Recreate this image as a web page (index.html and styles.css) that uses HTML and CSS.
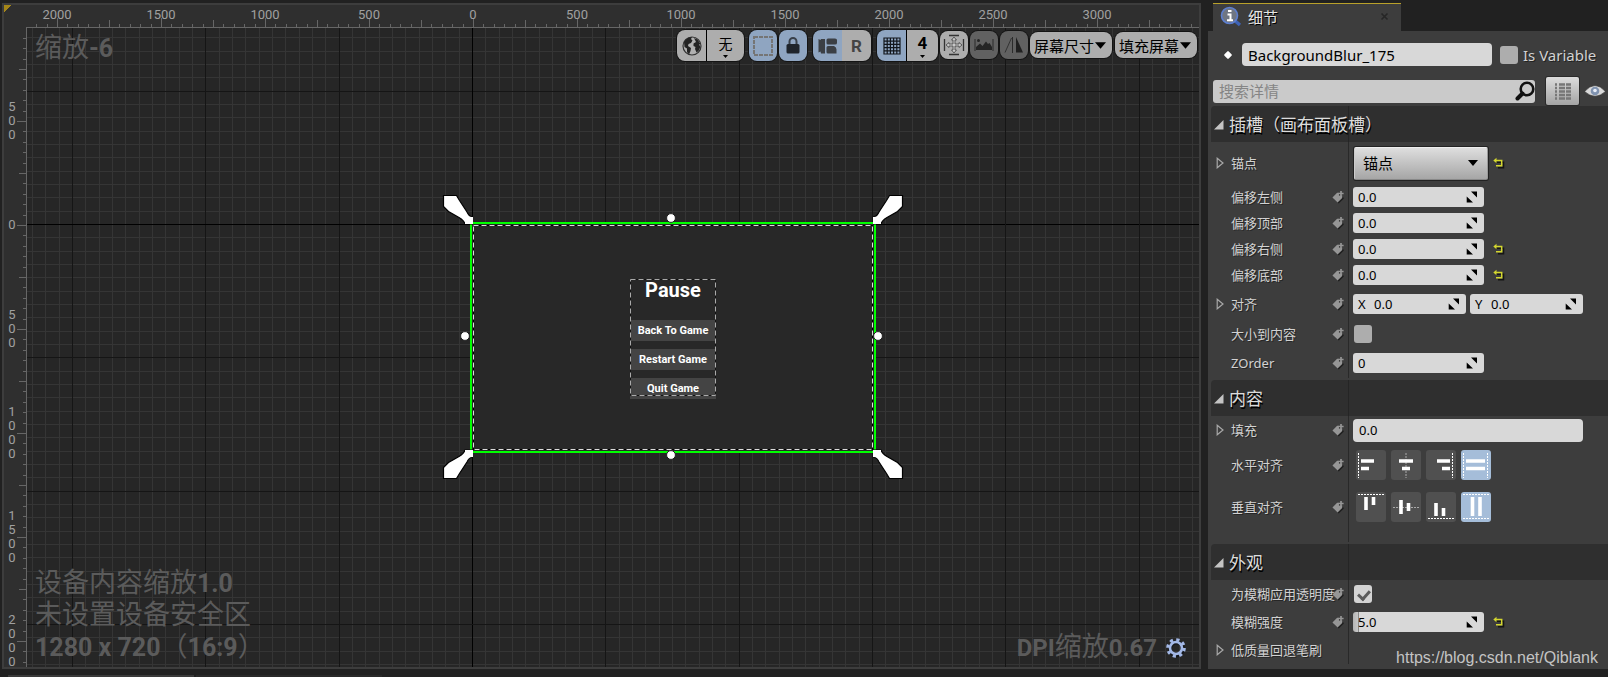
FILE: index.html
```html
<!DOCTYPE html>
<html lang="zh-CN">
<head>
<meta charset="utf-8">
<title>控件蓝图编辑器</title>
<link rel="stylesheet" href="styles.css">
</head>
<body>
<svg class="defs" aria-hidden="true">
  <symbol id="tag" viewBox="0 0 14 14">
    <path d="M1 8 6.500 2.500 8 4v2h3L12 8 6.500 13.500Z" fill="#1f1f1f" transform="translate(.8 .6)"/>
    <path d="M.5 7.500 5.500 2.500H7.500V5.500H11V8L6 12.800Z" fill="#969696"/>
    <path d="M9.700.5V6M7 3.200H12.500" stroke="#969696" stroke-width="1.800"/>
  </symbol>
  <symbol id="spin" viewBox="0 0 12 12"><path d="M5 .5H11V6.500ZM.7 5.500V11.500H7Z" fill="#000"/></symbol>
  <symbol id="reset" viewBox="0 0 12 12">
    <path d="M2 4.500H9.500V10H4" fill="none" stroke="#151515" stroke-width="1.500" transform="translate(1 .8)"/>
    <path d="M2 3.500H8.700V8.700H3" fill="none" stroke="#d3d62f" stroke-width="1.500"/><path d="M.3 3.500 3.500.8V6.200Z" fill="#d3d62f"/>
  </symbol>
  <symbol id="closed" viewBox="0 0 8 12"><path d="M1.200 1.200 7 6 1.200 10.800Z" fill="none" stroke="#a8a8a8" stroke-width="1.200"/></symbol>
  <symbol id="open" viewBox="0 0 10 10"><path d="M9.500 0V9.500H0Z" fill="#c4c4c4"/></symbol>
  <symbol id="down" viewBox="0 0 10 6"><path d="M0 0H10L5 6Z" fill="#000"/></symbol>
</svg>
<main class="app">
  <section class="designer" id="designer" aria-label="设计器">
    <svg class="grid" id="grid"></svg>
    <span class="corner"></span>
    <div class="toolbar">
      <div class="group">
        <button class="tool" aria-label="本地化"><svg width="20" height="20" viewBox="0 0 20 20"><circle cx="10" cy="10" r="9" fill="#b0b0b0" stroke="#333" stroke-width="1.200"/><path d="M2 6Q5 1 10 1L9 3 10.500 4.500 9 7 6.500 8 6 10 9 12 8.500 15 7 18.500 5 16 5 12.500 2.500 11ZM12 2 15.500 3.500 18.500 8 17 8.500 18.500 11 16.500 15 14.500 16.500 13 13 13.500 11 11.500 10 11.500 7.500 14 6Z" fill="#242424"/></svg></button>
        <button class="tool tall wide">无<svg class="mini"><use href="#down"/></svg></button>
      </div>
      <button class="tool on solo" aria-label="显示虚线轮廓"><svg width="20" height="20" viewBox="0 0 20 20"><rect x="1" y="1" width="18" height="18" fill="none" stroke="#757575" stroke-width="2" stroke-dasharray="4 1"/></svg></button>
      <button class="tool on" aria-label="锁定"><svg width="14" height="17" viewBox="0 0 14 17"><path d="M3.500 7V4.500a3.500 3.500 0 0 1 7 0V7" fill="none" stroke="#39404a" stroke-width="2"/><rect x=".5" y="7" width="13" height="9.500" rx="1.500" fill="#1f242b"/></svg></button>
      <div class="group split">
        <button class="tool on" aria-label="流布局"><svg width="20" height="18" viewBox="0 0 20 18"><path d="M.5 2 2.500 3 3 2H7V16.500H3L2.500 14.500.5 15.500ZM10 1.500H17Q19 1.500 19 3V6Q19 7.500 17 7.500H10Q8.500 7.500 8.500 6V3Q8.500 1.500 10 1.500ZM10 9H16Q18.500 10 18.500 12.500V16.500H10Q8.500 16.500 8.500 15V10.500Q8.500 9 10 9Z" fill="#3b3f45"/></svg></button>
        <button class="tool letter">R</button>
      </div>
      <div class="group gapped">
        <button class="tool on" aria-label="网格对齐"><svg width="18" height="18" viewBox="0 0 18 18"><path d="M1 1H17V17H1ZM4.200 1V17M7.400 1V17M10.600 1V17M13.800 1V17M1 4.200H17M1 7.400H17M1 10.600H17M1 13.800H17" fill="none" stroke="#12161c" stroke-width="1.200"/></svg></button>
        <button class="tool tall num">4<svg class="mini"><use href="#down"/></svg></button>
      </div>
      <button class="tool low" aria-label="缩放到适合"><svg width="22" height="22" viewBox="0 0 22 22"><path d="M1.500 5V17M20.500 5V17M6 1.500H16M6 20.500H16" stroke="#333" stroke-width="1.300"/><path d="M11 3 13.500 6H12V10H16V8.500L19 11 16 13.500V12H12V16H13.500L11 19 8.500 16H10V12H6V13.500L3 11 6 8.500V10H10V6H8.500Z" fill="#c8c8c8" stroke="#444" stroke-width=".8"/></svg></button>
      <button class="tool low off" aria-label="预览背景"><svg width="20" height="14" viewBox="0 0 20 14"><path d="M1 1V13M19 1V13" stroke="#2b2b2b"/><circle cx="4.500" cy="2.500" r="1.500" fill="#252525"/><path d="M2 12V9L6 5.500 8.500 8 12 3.500 14 6 15.500 5 18 9V12Z" fill="#252525"/></svg></button>
      <button class="tool low off" aria-label="翻转预览"><svg width="20" height="16" viewBox="0 0 20 16"><path d="M1 15.500 7.500 1" fill="none" stroke="#333"/><path d="M8.500 0V16" stroke="#2b2b2b"/><path d="M12 0 19 15.500H12Z" fill="#202020"/></svg></button>
      <span class="pick"><select aria-label="屏幕尺寸"><option>屏幕尺寸</option></select><svg><use href="#down"/></svg></span>
      <span class="pick last"><select aria-label="填充屏幕"><option>填充屏幕</option></select><svg><use href="#down"/></svg></span>
    </div>
    <p class="note zoom">缩放<b>-6</b></p>
    <div class="note info"><p>设备内容缩放<b>1.0</b></p><p>未设置设备安全区</p><p><b>1280 x 720</b>（<b>16:9</b>）</p></div>
    <div class="note dpi"><p><b>DPI</b>缩放<b>0.67</b></p>
      <button class="gear" aria-label="设置"><svg width="22" height="22" viewBox="0 0 22 22"><circle cx="11.500" cy="12" r="6.500" fill="none" stroke="#15171b" stroke-width="4"/><circle cx="11" cy="11" r="8.300" fill="none" stroke="#a3b8e6" stroke-width="3" stroke-dasharray="3.200 3.320"/><circle cx="11" cy="11" r="6" fill="none" stroke="#a3b8e6" stroke-width="2.600"/></svg></button>
    </div>
    <div class="stage">
      <div class="canvas">
        <div class="menu">
          <h1>Pause</h1>
          <button>Back To Game</button><button>Restart Game</button><button>Quit Game</button>
          <svg class="dash"><path d="M.5.5H85.500V116.500H.5Z" fill="none" stroke="#111"/><path d="M.5.5H85.500V116.500H.5Z" fill="none" stroke="#aaa" stroke-dasharray="5 3"/></svg>
        </div>
      </div>
      <svg class="handles" width="472" height="294" viewBox="0 0 472 294">
        <rect x="34.500" y="35.500" width="399" height="224" fill="none" stroke="#000"/>
        <rect x="34.500" y="35.500" width="399" height="224" fill="none" stroke="#ddd" stroke-dasharray="5 3"/>
        <rect x="32" y="33" width="404" height="229" fill="none" stroke="#0f0" stroke-width="2"/>
        <g fill="#fff" stroke="#000" stroke-width="1.200">
          <path id="petal" d="M4.500 5.500H17.500L20.500 10.500 28 22Q30 26.500 33 26.500V34H26Q25 30.500 20 27.500L9.500 21.500 4.500 16.500Z"/>
          <use href="#petal" transform="matrix(-1 0 0 1 468 0)"/>
          <use href="#petal" transform="matrix(1 0 0 -1 0 294)"/>
          <use href="#petal" transform="matrix(-1 0 0 -1 468 294)"/>
        </g>
        <path d="M26 27h8v7h-8zM434 27h8v7h-8zM26 260h8v7h-8zM434 260h8v7h-8z" fill="#fff"/>
        <g fill="#fff" stroke="#222"><circle cx="232" cy="28" r="4.400"/><circle cx="26" cy="146" r="4.400"/><circle cx="439" cy="146" r="4.400"/><circle cx="232" cy="265" r="4.400"/></g>
      </svg>
    </div>
  </section>

  <aside class="details">
    <header class="tabs"><div class="tab">
      <svg width="22" height="22" viewBox="0 0 22 22"><path d="m14 14 6 5" stroke="#3f63b5" stroke-width="3.500"/><circle cx="9.500" cy="9.500" r="8" fill="#6f7683" stroke="#5d7fd0" stroke-width="1.600"/><path d="M8 5h3.500M7.500 8.500h3V14M7 14.200h6" stroke="#fff" stroke-width="2" fill="none"/></svg>
      <span>细节</span><button aria-label="关闭" class="close"><svg width="9" height="9" viewBox="0 0 9 9"><path d="m1.500 1.500 6 6M7.500 1.500l-6 6" stroke="#262626" stroke-width="1.600"/></svg></button>
    </div></header>
    <div class="body">
      <div class="name">
        <span class="dot"></span><input type="text" class="field title" aria-label="名称" value="BackgroundBlur_175">
        <input type="checkbox" id="isvar"><label for="isvar">Is Variable</label>
      </div>
      <div class="search">
        <div class="find"><input type="search" aria-label="搜索详情" placeholder="搜索详情"><svg width="20" height="20" viewBox="0 0 20 20"><circle cx="12" cy="8" r="6.300" fill="none" stroke="#111" stroke-width="2.600"/><path d="m7.500 12.500-5 5" stroke="#111" stroke-width="4" stroke-linecap="round"/></svg></div>
        <button class="matrix" aria-label="属性矩阵"><svg width="18" height="19" viewBox="0 0 18 19"><path d="M1 2.500h2M5 2.500h6M12 2.500h5M1 6h2M5 6h6M12 6h5M1 9.500h2M5 9.500h6M12 9.500h5M1 13h2M5 13h6M12 13h5M1 16.500h2M5 16.500h6M12 16.500h5" stroke="#777" stroke-width="2.400"/></svg></button>
        <button class="eye" aria-label="视图选项"><svg width="22" height="14" viewBox="0 0 22 14"><path d="M.5 7.500Q11-4.500 21.500 7.500 11 17 .5 7.500Z" fill="#d9d9d9" stroke="#222" stroke-width=".6"/><circle cx="11" cy="7" r="4.300" fill="#8093b0"/><circle cx="11" cy="6.500" r="1.800" fill="#e8eef8"/></svg></button>
      </div>

      <section class="cat">
        <h2><svg><use href="#open"/></svg>插槽（画布面板槽）</h2>
        <div class="row h42"><svg class="exp"><use href="#closed"/></svg><label for="anchor">锚点</label><div class="val"><span class="combo"><select id="anchor"><option>锚点</option></select><svg><use href="#down"/></svg></span><button class="reset" aria-label="重置"><svg><use href="#reset"/></svg></button></div></div>
        <div class="row h26"><label for="l">偏移左侧</label><svg class="tag"><use href="#tag"/></svg><div class="val"><span class="number"><input id="l" value="0.0"><svg><use href="#spin"/></svg></span></div></div>
        <div class="row h26"><label for="t">偏移顶部</label><svg class="tag"><use href="#tag"/></svg><div class="val"><span class="number"><input id="t" value="0.0"><svg><use href="#spin"/></svg></span></div></div>
        <div class="row h26"><label for="r">偏移右侧</label><svg class="tag"><use href="#tag"/></svg><div class="val"><span class="number"><input id="r" value="0.0"><svg><use href="#spin"/></svg></span><button class="reset" aria-label="重置"><svg><use href="#reset"/></svg></button></div></div>
        <div class="row h26"><label for="b">偏移底部</label><svg class="tag"><use href="#tag"/></svg><div class="val"><span class="number"><input id="b" value="0.0"><svg><use href="#spin"/></svg></span><button class="reset" aria-label="重置"><svg><use href="#reset"/></svg></button></div></div>
        <div class="row h32"><svg class="exp"><use href="#closed"/></svg><label for="ax">对齐</label><svg class="tag"><use href="#tag"/></svg><div class="val pair"><span class="number"><label for="ax">X</label><input id="ax" value="0.0"><svg><use href="#spin"/></svg></span><span class="number"><label for="ay">Y</label><input id="ay" value="0.0"><svg><use href="#spin"/></svg></span></div></div>
        <div class="row h28"><label for="size">大小到内容</label><svg class="tag"><use href="#tag"/></svg><div class="val"><input type="checkbox" id="size"></div></div>
        <div class="row h30"><label for="z">ZOrder</label><svg class="tag"><use href="#tag"/></svg><div class="val"><span class="number"><input id="z" value="0"><svg><use href="#spin"/></svg></span></div></div>
      </section>

      <section class="cat">
        <h2><svg><use href="#open"/></svg>内容</h2>
        <div class="row h28"><svg class="exp"><use href="#closed"/></svg><label for="pad">填充</label><svg class="tag"><use href="#tag"/></svg><div class="val"><input type="text" class="field padding" id="pad" value="0.0"></div></div>
        <div class="row h42"><span class="label">水平对齐</span><svg class="tag"><use href="#tag"/></svg><div class="val aligns">
          <button aria-label="左对齐"><svg viewBox="0 0 30 30"><path d="M2.500 3V28" class="dots"/><path d="M5 11H18M5 18.500H13" class="bars"/></svg></button>
          <button aria-label="水平居中"><svg viewBox="0 0 30 30"><path d="M15 3V28" class="dots faint"/><path d="M8 11H22M11 18.500H19" class="bars"/></svg></button>
          <button aria-label="右对齐"><svg viewBox="0 0 30 30"><path d="M26.500 3V28" class="dots"/><path d="M11 11H24M16 18.500H24" class="bars"/></svg></button>
          <button aria-label="水平填充" class="on"><svg viewBox="0 0 30 30"><path d="M2.500 3V28M26.500 3V28" class="dots"/><path d="M5 11H24M5 18.500H24" class="bars"/></svg></button>
        </div></div>
        <div class="row h42"><span class="label">垂直对齐</span><svg class="tag"><use href="#tag"/></svg><div class="val aligns">
          <button aria-label="顶对齐"><svg viewBox="0 0 30 30"><path d="M2 2.500H28" class="dots"/><path d="M10 5V18M17.500 5V13" class="bars"/></svg></button>
          <button aria-label="垂直居中"><svg viewBox="0 0 30 30"><path d="M2 15.500H28" class="dots faint"/><path d="M10 8V22M17.500 11V19" class="bars"/></svg></button>
          <button aria-label="底对齐"><svg viewBox="0 0 30 30"><path d="M2 26.500H28" class="dots"/><path d="M10 11V24M17.500 16V24" class="bars"/></svg></button>
          <button aria-label="垂直填充" class="on"><svg viewBox="0 0 30 30"><path d="M2 2.500H28M2 26.500H28" class="dots"/><path d="M11.500 5V24M19 5V24" class="bars"/></svg></button>
        </div></div>
        <div class="row h14"></div>
      </section>

      <section class="cat">
        <h2><svg><use href="#open"/></svg>外观</h2>
        <div class="row h28"><label for="alpha">为模糊应用透明度</label><svg class="tag"><use href="#tag"/></svg><div class="val"><input type="checkbox" id="alpha" checked></div></div>
        <div class="row h28"><label for="blur">模糊强度</label><svg class="tag"><use href="#tag"/></svg><div class="val"><span class="number filled"><input id="blur" value="5.0"><svg><use href="#spin"/></svg></span><button class="reset" aria-label="重置"><svg><use href="#reset"/></svg></button></div></div>
        <div class="row h28"><svg class="exp"><use href="#closed"/></svg><span class="label">低质量回退笔刷</span><div class="val"></div></div>
      </section>
      <span class="credit">https://blog.csdn.net/Qiblank</span>
    </div>
  </aside>
</main>
<footer class="dock"><span></span><span></span></footer>
<script src="grid.js"></script>
</body>
</html>
```

FILE: styles.css
```css
* { box-sizing: border-box; }
body { margin: 0; min-height: 100vh; display: flex; flex-direction: column; background: #212121; color: #d2d2d2; font: 13px "Noto Sans", "Noto Sans CJK SC", sans-serif; overflow: hidden; }
h1, h2, p { margin: 0; }
button, input, select { font: inherit; color: inherit; margin: 0; }
button { border: 0; padding: 0; background: none; display: flex; align-items: center; justify-content: center; }
svg { display: block; flex: none; }
.defs { position: absolute; width: 0; height: 0; }
.app { flex: 1; display: flex; gap: 7px; padding: 3px 0 0 2px; }

/* designer */
.designer { flex: 1; min-width: 0; position: relative; border: 2px solid #3d3d3d; background: #262626; overflow: hidden; }
.grid { position: absolute; inset: 0; width: 100%; height: 100%; font: 13px Roboto, sans-serif; }
.corner { position: absolute; left: -2px; top: -2px; width: 12px; height: 12px; background: linear-gradient(135deg, #a58618 50%, transparent 50%); }
.toolbar { position: absolute; right: 2px; top: 25px; display: flex; align-items: flex-start; gap: 2px; color: #000; }
.group { display: flex; gap: 1px; background: #000; border-radius: 8px; box-shadow: 0 0 0 1px #141414; overflow: hidden; }
.tool { width: 28px; height: 31px; background: #adadad; border-radius: 8px; box-shadow: 0 0 0 1px #141414; }
.group .tool { width: 29px; border-radius: 0; box-shadow: none; }
.toolbar .solo { margin-left: 3px; }
.toolbar .split, .toolbar .gapped { margin-left: 4px; }
.toolbar .split { gap: 0; }
.tool.on { background: #8fa5c1; }
.tool.off { background: #616161; }
.tool.low { height: 28px; margin-top: 1px; }
.tool.letter { color: #444; font: bold 17px Roboto, sans-serif; }
.tool.tall { flex-direction: column; gap: 2px; font: 14px/20px "Noto Sans CJK SC", sans-serif; }
.group .tool.wide { width: 37px; }
.group .tool.num { width: 31px; font: bold 17px/20px Roboto, sans-serif; }
.mini { width: 5px; height: 3px; }
.pick { position: relative; display: flex; align-items: center; height: 26px; margin-top: 2px; background: #adadad; border-radius: 8px; box-shadow: 0 0 0 1px #141414; }
.last { margin-left: 1px; }
.pick select { appearance: none; border: 0; background: none; width: 82px; height: 26px; padding: 0 4px; font: 15px "Noto Sans CJK SC", sans-serif; }
.pick svg { position: absolute; right: 6px; width: 11px; height: 7px; pointer-events: none; }
.note { position: absolute; left: 31px; color: #5b5b5b; font: 27px/32px "Noto Sans CJK SC", sans-serif; white-space: nowrap; }
.note p { height: 32px; }
.note b { font-family: Roboto, sans-serif; font-size: 25px; line-height: 1; }
.zoom { top: 25px; }
.info { bottom: 6px; }
.dpi { left: auto; right: 12px; bottom: 6px; display: flex; align-items: center; gap: 8px; }
.dpi b { font-size: 24px; }
.gear { padding-top: 6px; }

.stage { position: absolute; left: 468px; top: 219px; }
.canvas { position: absolute; left: -1px; top: -1px; width: 404px; height: 229px; background: #282828; }
.handles { position: absolute; left: -33px; top: -34px; }
.menu { position: absolute; left: 159px; top: 56px; width: 86px; display: flex; flex-direction: column; color: #fff; font: bold 11px Roboto, sans-serif; }
.menu h1 { flex: none; font: bold 20px/22px Roboto, sans-serif; text-align: center; height: 41px; }
.menu button { height: 21px; margin-bottom: 8px; flex: none; background: #444; }
.dash { position: absolute; inset: 0; width: 100%; height: 100%; }

/* details panel */
.details { width: 400px; display: flex; flex-direction: column; }
.tabs { padding-left: 5px; }
.tab { width: 188px; height: 28px; display: flex; align-items: center; gap: 6px; padding: 0 12px 2px 7px; background: #3d3d3d; border-top: 1px solid #b9a12a; font-size: 15px; font-family: "Noto Sans CJK SC", sans-serif; text-shadow: 1px 1px #000; color: #e6e6e6; }
.close { margin-left: auto; }
.body { flex: 1; background: #3d3d3d; position: relative; }
.name { display: flex; align-items: center; height: 48px; padding: 0 0 1px 17px; font-size: 15px; text-shadow: 1px 1px #222; }
.name .field { text-shadow: none; }
.name label { margin-left: 5px; white-space: nowrap; }
.dot { width: 6px; height: 6px; margin-right: 11px; background: #fff; transform: rotate(45deg); border-radius: 1px; }
.field { border: 0; border-radius: 4px; background: #d8d8d8; color: #000; height: 23px; padding: 0 6px; min-width: 0; }
.title { flex: 0 0 250px; margin-right: 8px; font-size: 15px; }
input[type=checkbox] { appearance: none; width: 18px; height: 18px; flex: none; background: #adadad; border-radius: 3px; }
.val input[type=checkbox] { margin-left: 1px; }
input[type=checkbox]:checked { background: #d4d4d4; position: relative; }
input[type=checkbox]:checked::after { content: ""; position: absolute; left: 6px; top: 3px; width: 5px; height: 9px; border: solid #5c5c5c; border-width: 0 3px 3px 0; transform: rotate(42deg); }
.search { display: flex; align-items: center; height: 27px; padding: 0 2px 3px 5px; }
.find { flex: 1; height: 23px; display: flex; align-items: center; background: #cacaca; border-radius: 3px; margin-right: 11px; }
.find input { flex: 1; min-width: 0; border: 0; background: none; padding: 0 6px; font-size: 15px; color: #000; outline: 0; }
.find input::placeholder { color: #858585; }
.matrix { width: 33px; height: 28px; margin-right: 5px; background: linear-gradient(#dcdcdc, #a4a4a4); border-radius: 2px; box-shadow: 0 0 0 1px #2a2a2a; }
.cat { padding-bottom: 2px; }
.cat h2 { display: flex; align-items: center; gap: 5px; height: 36px; margin-left: 3px; padding: 0 0 2px 3px; background: linear-gradient(#252525, #252525) 137px 0 / 1px 100% no-repeat #2f2f2f; border-radius: 4px 0 0 0; font: 17px "Noto Sans CJK SC", sans-serif; color: #dcdcdc; text-shadow: 1px 2px #000; }
.cat h2 svg { width: 10px; height: 10px; margin-top: 4px; }
.row { position: relative; display: flex; align-items: center; padding-left: 23px; background: linear-gradient(#292929, #292929) 140px 0 / 1px 100% no-repeat; }
.h14 { height: 14px; } .h26 { height: 26px; } .h28 { height: 28px; } .h30 { height: 30px; } .h32 { height: 32px; } .h42 { height: 42px; }
.row > label, .label { width: 101px; padding-bottom: 1px; white-space: nowrap; text-shadow: 1px 1px #262626; }
.exp { position: absolute; left: 8px; width: 8px; height: 12px; }
.tag { width: 13px; height: 14px; margin-right: -13px; }
.val { margin-left: 21px; display: flex; align-items: center; }
.number { width: 131px; height: 20px; display: flex; align-items: center; background: #d8d8d8; border-radius: 3px; color: #000; padding: 0 6px 0 5px; }
.number input { flex: 1; min-width: 0; border: 0; background: none; padding: 0; }
.number svg { width: 12px; height: 12px; }
.number label { width: 16px; }
.filled { background: linear-gradient(90deg, #b5b5b5, #c8c8c8 5px, #888 5px, #888 6px, #d8d8d8 6px); }
.pair { gap: 4px; }
.pair .number { width: 113px; }
.padding { width: 230px; }
.combo { position: relative; display: flex; align-items: center; margin-left: 1px; }
.combo select { appearance: none; width: 134px; height: 33px; border: 1px solid; border-color: #eee #999 #888 #ccc; border-radius: 2px; background: linear-gradient(#dedede, #a6a6a6); box-shadow: 0 0 0 1px #222; color: #000; padding: 0 8px; font-size: 15px; }
.combo svg { position: absolute; right: 10px; width: 10px; height: 6px; pointer-events: none; }
.reset { margin-left: 9px; }
.combo + .reset { margin-left: 5px; }
.reset svg { width: 12px; height: 12px; }
.aligns { gap: 5px; padding-left: 3px; }
.aligns button { width: 30px; height: 30px; background: #505050; border-radius: 3px; }
.aligns .on { background: #a5bdd9; }
.aligns svg { width: 30px; height: 30px; }
.dots { stroke: #fff; stroke-width: 1; stroke-dasharray: 2 1; fill: none; }
.faint { stroke: #aaa; }
.bars { stroke: #fff; stroke-width: 3.6; fill: none; }
.credit { position: absolute; right: 10px; bottom: 2px; font: 16px "Liberation Sans", sans-serif; color: #c4c4c4; }
.dock { height: 8px; display: flex; align-items: flex-end; gap: 2px; padding-left: 8px; }
.dock span { width: 186px; height: 2px; background: #3a3a3a; }
.dock span + span { background: #292929; }
```

FILE: grid.js
```js
(function () {
  var svg = document.getElementById('grid');
  var NS = 'http://www.w3.org/2000/svg';
  var RULER = 23, CELL = 40 / 3, TICK = 10.4;
  var ox = 468, oy = 219;

  function rect(x, y, w, h, fill) {
    var r = document.createElementNS(NS, 'rect');
    r.setAttribute('x', x); r.setAttribute('y', y);
    r.setAttribute('width', w); r.setAttribute('height', h);
    r.setAttribute('fill', fill);
    svg.appendChild(r);
  }
  function text(x, y, s) {
    var t = document.createElementNS(NS, 'text');
    t.setAttribute('x', x); t.setAttribute('y', y);
    t.setAttribute('text-anchor', 'middle');
    t.setAttribute('fill', '#a0a0a0');
    t.textContent = s;
    svg.appendChild(t);
  }
  function gridLines(w, h, major) {
    for (var i = -80; i < 160; i++) {
      if ((i % 10 === 0) !== major) continue;
      var c = i === 0 ? '#000' : major ? '#151515' : '#353535';
      var x = Math.round(ox + i * CELL), y = Math.round(oy + i * CELL);
      if (x > RULER && x < w) rect(x, RULER, 1, h, c);
      if (y > RULER && y < h) rect(RULER, y, w, 1, c);
    }
  }
  function draw() {
    var w = svg.clientWidth, h = svg.clientHeight;
    svg.textContent = '';
    gridLines(w, h, false);
    gridLines(w, h, true);
    rect(0, 0, w, RULER, '#2f2f2f');
    rect(0, 0, RULER, h, '#2f2f2f');
    rect(RULER - 1, RULER - 1, w, 1, '#666');
    rect(RULER - 1, RULER - 1, 1, h, '#666');
    for (var i = -80; i < 160; i++) {
      var len = i % 10 === 0 ? 9 : i % 5 === 0 ? 7 : 3;
      var x = Math.round(ox + 1 + i * TICK), y = Math.round(oy + 1 + i * TICK);
      var label = String(Math.abs(i) * 50);
      if (x > RULER && x < w) {
        rect(x, RULER - 1 - len, 1, len, '#666');
        if (i % 10 === 0) text(x, 14, label);
      }
      if (y > RULER && y < h + 20) {
        rect(RULER - 1 - len, y, len, 1, '#666');
        if (i % 10 === 0) {
          for (var k = 0; k < label.length; k++) {
            text(8, y + 4 + (k - (label.length - 1) / 2) * 14, label[k]);
          }
        }
      }
    }
  }
  draw();
  window.addEventListener('resize', draw);
})();
```
